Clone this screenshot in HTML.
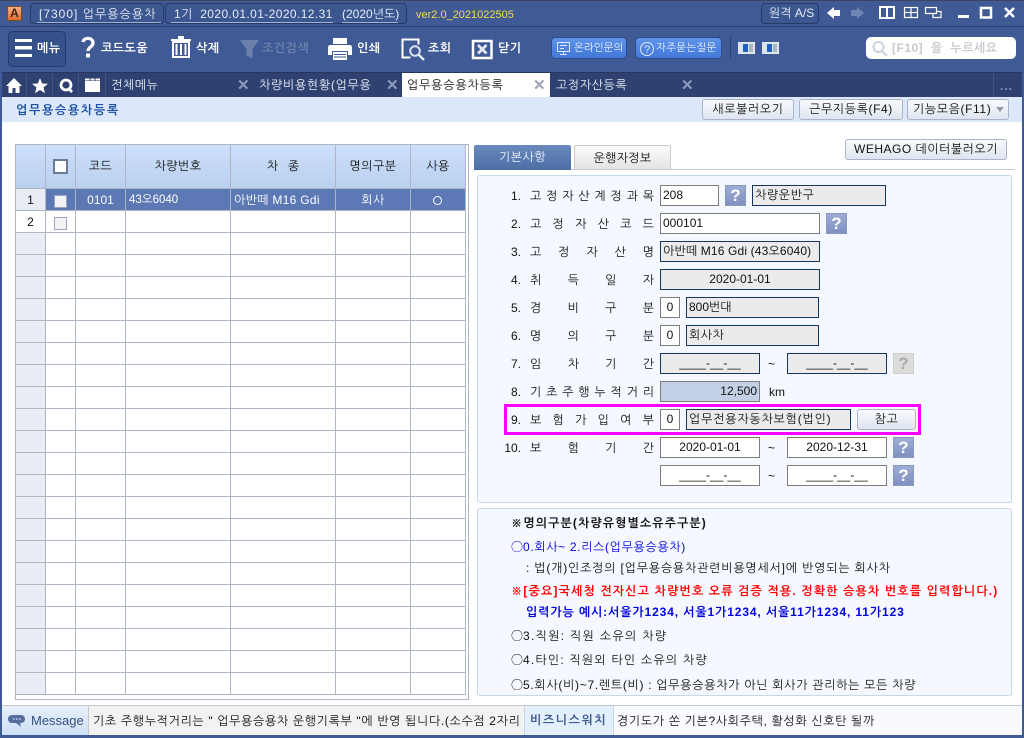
<!DOCTYPE html>
<html lang="ko"><head><meta charset="utf-8"><title>업무용승용차등록</title>
<style>
html,body{margin:0;padding:0;width:1024px;height:738px;overflow:hidden;background:#3f5a94}
body{position:relative;font:12px/14px "Liberation Sans","NanumGothic","Noto Sans CJK KR",sans-serif;color:#111}
div,span.a,svg{position:absolute}
.t{white-space:nowrap}
.c{text-align:center}
.w{color:#fff}
.box{background:#3c5690;border:1px solid #263a68;border-radius:4px;box-sizing:border-box}
.u{height:1px;background:#9fb2d6}
.btn{box-sizing:border-box;height:21px;border:1px solid #aab4c6;border-radius:3px;background:linear-gradient(#f8fafd,#dfe5ef);text-align:center;line-height:19px;white-space:nowrap;letter-spacing:.6px}
.in,.ro,.bl{box-sizing:border-box;height:21px;line-height:19px;padding:0 2px;white-space:nowrap}
.in{background:#fff;border:1px solid #7d7d7d}
.ro{background:#ebebeb;border:1px solid #17365d}
.bl{background:#c3d0e6;border:1px solid #7d7d7d}
.q{width:21px;height:21px;box-sizing:border-box;background:linear-gradient(#9fadd6,#7f90c0);border:1px solid #8898c4;color:#fff;font:bold 17px/19px "Liberation Sans",sans-serif;text-align:center}
.q.d{background:#dcdcdc;border-color:#cfcfcf;color:#a9a9a9}
.lb{display:flex;justify-content:space-between;left:530px;width:124px;height:14px;white-space:nowrap}
.n{left:490px;width:31px;text-align:right;white-space:nowrap}
.l{left:511px;white-space:nowrap;letter-spacing:.8px}
.m{font-family:"Noto Sans CJK KR",sans-serif;letter-spacing:0}
.tool{font-weight:bold;color:#fff;white-space:nowrap;top:41px;font-size:12px;letter-spacing:.5px}
.x{font:bold 15px/15px "Liberation Sans",sans-serif;color:#8d9dbd}
.gh{top:159px;color:#111;text-align:center;white-space:nowrap}
.rn{left:16px;width:29px;text-align:center}
</style></head><body>

<!-- title bar -->
<div style="left:0;top:0;width:1024px;height:1px;background:#3a4560"></div>
<div style="left:0;top:26px;width:1024px;height:1px;background:#2c3f6e"></div>
<div style="left:7px;top:6px;width:15px;height:15px;background:linear-gradient(#f6b083,#dd6d33);border:1px solid #7d4a2c;box-sizing:border-box;color:#4a2310;font:bold 12px/13px 'Liberation Sans',sans-serif;text-align:center">A</div>
<div class="box" style="left:30px;top:3px;width:134px;height:21px"></div>
<div class="box" style="left:165px;top:3px;width:242px;height:21px"></div>
<div class="t w" style="left:39px;top:7px;color:#e6ecf8;letter-spacing:1px">[7300] 업무용승용차</div>
<div class="u" style="left:37px;top:22px;width:124px"></div>
<div class="t w" style="left:174px;top:7px;color:#e6ecf8;letter-spacing:.4px">1기&nbsp; 2020.01.01-2020.12.31</div>
<div class="u" style="left:171px;top:22px;width:162px"></div>
<div class="t w" style="left:342px;top:7px;color:#e6ecf8">(2020년도)</div>
<div class="u" style="left:342px;top:22px;width:56px"></div>
<div class="t" style="left:416px;top:8px;color:#f4dc4a;font-size:11px">ver2.0_2021022505</div>

<div class="box" style="left:761px;top:3px;width:58px;height:21px"></div>
<div class="t" style="left:769px;top:6px;color:#e6ecf8">원격 A/S</div>
<svg style="left:820px;top:0" width="204" height="26" viewBox="0 0 204 26">
<path d="M7 13l7-6v3h6v6h-6v3z" fill="#fff"/>
<path d="M44 13l-7-6v3h-6v6h6v3z" fill="#6d84b4"/>
<path d="M60 7h14v11h-14zM67 7v12" fill="none" stroke="#fff" stroke-width="2"/>
<path d="M84.500 7.500h13v10h-13zM84.500 12.500h13M91 7.500v10" fill="none" stroke="#fff" stroke-width="1.200"/>
<path d="M105.500 7.500h11v6h-11zM116.500 11.500h4.500v6h-8v-4" fill="none" stroke="#fff" stroke-width="1.200"/>
<path d="M138 15h11v3h-11z" fill="#fff"/>
<path d="M161 8h10v9.500h-10z" fill="none" stroke="#fff" stroke-width="2.500"/>
<path d="M185 8l9 9M194 8l-9 9" stroke="#fff" stroke-width="2.500" fill="none"/>
</svg>

<!-- toolbar -->
<div style="left:8px;top:31px;width:58px;height:36px;box-sizing:border-box;background:#36508a;border:1px solid #26396a;border-radius:5px"></div>
<svg style="left:0;top:27px" width="520" height="46" viewBox="0 0 520 46">
<path d="M15 12h17v3h-17zM15 19h17v3.500h-17zM15 27h17v3h-17z" fill="#fff"/>
<path d="M83 15c1-5 10-5 10 1 0 4-5 4-5 8" fill="none" stroke="#fff" stroke-width="3.300"/><rect x="86" y="26.500" width="4" height="4" fill="#fff"/>
<path d="M178 9h6v3h7v2h-20v-2h7z" fill="#fff"/>
<path d="M173 15h16v15h-16zM176.500 17v11M181 17v11M185.500 17v11" fill="none" stroke="#fff" stroke-width="2"/>
<path d="M240 13h19l-6.500 9v9.500l-6-3v-6.500z" fill="#6b80ab"/>
<path d="M333 11h14v6h-14z" fill="#fff"/>
<path d="M330 18h20c1 0 2 1 2 2v8h-4v-4h-16v4h-4v-8c0-1 1-2 2-2z" fill="#fff"/>
<path d="M333 25h14v8h-14z" fill="#fff"/><path d="M334 27.500h12M334 30h12" stroke="#3f5a94"/>
<path d="M411 12.500h-8.500v18h8" fill="none" stroke="#fff" stroke-width="2"/>
<path d="M411 12.500h7.500v5" fill="none" stroke="#fff" stroke-width="2"/>
<circle cx="415" cy="24" r="4.800" fill="none" stroke="#d7def0" stroke-width="2"/><path d="M419 28l5 5" stroke="#fff" stroke-width="2.200"/>
<path d="M473 14h18.500v17h-18.500z" fill="none" stroke="#fff" stroke-width="2.500"/>
<path d="M478 18l8.500 8.500M486.500 18l-8.500 8.500" stroke="#e4e9f5" stroke-width="2.800"/>
</svg>
<div class="tool" style="left:37px">메뉴</div>
<div class="tool" style="left:101px">코드도움</div>
<div class="tool" style="left:196px">삭제</div>
<div class="tool" style="left:262px;color:#6b80ab">조건검색</div>
<div class="tool" style="left:357px">인쇄</div>
<div class="tool" style="left:428px">조회</div>
<div class="tool" style="left:498px">닫기</div>

<div style="left:551px;top:37px;width:76px;height:22px;box-sizing:border-box;border:1px solid #2f4a88;border-radius:4px;background:linear-gradient(#5d93ea,#4379d8)"></div>
<div style="left:635px;top:37px;width:87px;height:22px;box-sizing:border-box;border:1px solid #2f4a88;border-radius:4px;background:linear-gradient(#5d93ea,#4379d8)"></div>
<svg style="left:555px;top:40px" width="102" height="18" viewBox="0 0 102 18">
<path d="M2.500 2.500h12v9h-12zM5 14.500h7M8.500 11.500v3M5 5.500h7M5 8.500h4" fill="none" stroke="#dfe9fb" stroke-width="1"/>
<circle cx="92" cy="9" r="6.500" fill="none" stroke="#dfe9fb"/><text x="89" y="13" font-size="11" fill="#dfe9fb" font-family="Liberation Sans">?</text>
</svg>
<div class="t" style="left:574px;top:41px;color:#eef3fc;font-size:10.500px">온라인문의</div>
<div class="t" style="left:656px;top:41px;color:#eef3fc;font-size:10.500px;letter-spacing:.2px">자주묻는질문</div>
<div style="left:730px;top:37px;width:1px;height:21px;background:#2c3f6e"></div>
<svg style="left:738px;top:41px" width="44" height="14" viewBox="0 0 44 14">
<rect x="0" y="1" width="17" height="12" fill="#dfe5ef"/><rect x="5" y="3" width="5" height="8" fill="#1f62c4"/><rect x="11" y="3" width="4" height="8" fill="#a9b6c8"/>
<rect x="24" y="1" width="17" height="12" fill="#dfe5ef"/><rect x="29" y="3" width="5" height="8" fill="#1f62c4"/><rect x="35" y="3" width="4" height="8" fill="#a9b6c8"/>
</svg>
<div style="left:866px;top:37px;width:150px;height:22px;background:#fff;border-radius:5px"></div>
<svg style="left:871px;top:40px" width="18" height="18" viewBox="0 0 18 18"><circle cx="7.500" cy="7" r="5" fill="none" stroke="#c9d2e0" stroke-width="2"/><path d="M11 11l5 5" stroke="#c9d2e0" stroke-width="2.200"/></svg>
<div class="t" style="left:892px;top:41px;color:#c6c9cf;font-weight:bold;letter-spacing:.5px">[F10]&nbsp; 을&nbsp; 누르세요</div>

<!-- tab bar -->
<div style="left:2px;top:72px;width:1020px;height:25px;background:#2f4170;border-top:1px solid #263660;box-sizing:border-box"></div>
<svg style="left:0;top:73px" width="110" height="24" viewBox="0 0 110 24">
<path d="M14 5l8 8h-2.500v7h-4v-5h-3v5h-4v-7h-2.500z" fill="#fff"/>
<path d="M40 5l2.200 5.500 5.800.3-4.500 3.700 1.500 5.700-5-3.200-5 3.200 1.500-5.700-4.500-3.700 5.800-.3z" fill="#fff"/>
<circle cx="66" cy="12" r="5" fill="none" stroke="#fff" stroke-width="2.800"/><path d="M68 15l4 4" stroke="#fff" stroke-width="2.800"/>
<path d="M85 8h15v11h-15z" fill="#fff"/><path d="M85 5.500h15v2h-15z" fill="#fff"/><path d="M90 5v3M95 5v3" stroke="#2f4170"/>
<path d="M26.500 0v24M52.500 0v24M78.500 0v24M105.500 0v24" stroke="#3f5587"/>
</svg>
<div class="t" style="left:111px;top:78px;color:#e8edf7;letter-spacing:.6px">전체메뉴</div>
<div class="x" style="left:237px;top:78px">✕</div>
<div class="t" style="left:259px;top:78px;color:#e8edf7;letter-spacing:.7px">차량비용현황(업무용</div>
<div class="x" style="left:386px;top:78px">✕</div>
<div style="left:402px;top:73px;width:148px;height:24px;background:#fff"></div>
<div class="t" style="left:407px;top:78px;color:#111;letter-spacing:.8px">업무용승용차등록</div>
<div class="x" style="left:533px;top:78px;color:#9aa3b5">✕</div>
<div class="t" style="left:556px;top:78px;color:#e8edf7;letter-spacing:.6px">고정자산등록</div>
<div class="x" style="left:681px;top:78px">✕</div>
<div style="left:993px;top:73px;width:1px;height:24px;background:#3f5587"></div>
<div class="t" style="left:1000px;top:79px;color:#8d9dbd;font-weight:bold;letter-spacing:1px">...</div>

<!-- content -->
<div style="left:2px;top:97px;width:1020px;height:609px;background:#fff"></div>
<div style="left:2px;top:97px;width:1020px;height:25px;background:#dce8fa"></div>
<div class="t" style="left:16px;top:103px;color:#1a4fa0;font-weight:bold;letter-spacing:1.700px">업무용승용차등록</div>
<div class="btn" style="left:702px;top:99px;width:92px">새로불러오기</div>
<div class="btn" style="left:799px;top:99px;width:104px">근무지등록(F4)</div>
<div class="btn" style="left:907px;top:99px;width:102px;text-align:left;padding-left:5px">기능모음(F11)</div>
<div style="left:996px;top:107px;width:0;height:0;border:4px solid transparent;border-top:5px solid #8f98a8"></div>

<!-- grid -->
<div style="left:15px;top:144px;width:454px;height:556px;box-sizing:border-box;border:1px solid #aeb5c4;background:#fff"></div>
<div style="left:16px;top:145px;width:449px;height:44px;background:linear-gradient(#cddffa,#b9d0ee)"></div>
<div style="left:16px;top:189px;width:29px;height:22px;background:#e8ecf4"></div>
<div style="left:16px;top:233px;width:29px;height:462px;background:#e8ecf4"></div>
<div style="left:45px;top:189px;width:420px;height:22px;background:#5d79b5"></div>
<div style="left:16px;top:189px;width:449px;height:506px;background:repeating-linear-gradient(to bottom,transparent 0,transparent 21px,#aeb5c4 21px,#aeb5c4 22px)"></div>
<div style="left:16px;top:188px;width:449px;height:1px;background:#aeb5c4"></div>
<div style="left:45px;top:145px;width:1px;height:550px;background:#aeb5c4"></div>
<div style="left:75px;top:145px;width:1px;height:550px;background:#aeb5c4"></div>
<div style="left:125px;top:145px;width:1px;height:550px;background:#aeb5c4"></div>
<div style="left:230px;top:145px;width:1px;height:550px;background:#aeb5c4"></div>
<div style="left:335px;top:145px;width:1px;height:550px;background:#aeb5c4"></div>
<div style="left:410px;top:145px;width:1px;height:550px;background:#aeb5c4"></div>
<div style="left:465px;top:145px;width:1px;height:550px;background:#aeb5c4"></div>
<div style="left:53px;top:159px;width:15px;height:15px;box-sizing:border-box;background:#fff;border:2px solid #6c7a99"></div>
<div class="gh" style="left:76px;width:49px;letter-spacing:.5px">코드</div>
<div class="gh" style="left:126px;width:104px;letter-spacing:.5px">차량번호</div>
<div class="gh" style="left:231px;width:104px">차&nbsp; &nbsp;종</div>
<div class="gh" style="left:336px;width:74px;letter-spacing:.5px">명의구분</div>
<div class="gh" style="left:411px;width:54px;letter-spacing:.5px">사용</div>
<div class="rn" style="top:193px">1</div>
<div class="rn" style="top:215px">2</div>
<div style="left:54px;top:195px;width:13px;height:13px;box-sizing:border-box;background:#f3f3f3;border:1px solid #9aa5bd"></div>
<div style="left:54px;top:217px;width:13px;height:13px;box-sizing:border-box;background:#f3f3f3;border:1px solid #9aa5bd"></div>
<div class="t c w" style="left:76px;width:49px;top:193px">0101</div>
<div class="t w" style="left:129px;top:193px;font-size:11.500px">43오6040</div>
<div class="t w" style="left:234px;top:193px;letter-spacing:.3px">아반떼 M16 Gdi</div>
<div class="t c w" style="left:336px;width:74px;top:193px;letter-spacing:.5px">회사</div>
<div style="left:433px;top:196px;width:9px;height:9px;box-sizing:border-box;border:1px solid #fff;border-radius:50%"></div>

<!-- tabs -->
<div style="left:474px;top:169px;width:541px;height:1px;background:#c7ccd6"></div>
<div class="c w" style="left:474px;top:145px;width:97px;height:25px;line-height:24px;background:linear-gradient(#6a8abb,#4c6ea6);border-radius:2px 2px 0 0;letter-spacing:.5px;color:#eef3fc">기본사항</div>
<div class="c" style="left:574px;top:145px;width:97px;height:24px;line-height:24px;box-sizing:border-box;border:1px solid #ccc;border-bottom:0;background:linear-gradient(#fafafa,#e4e4e4);border-radius:2px 2px 0 0;letter-spacing:.3px">운행자정보</div>
<div class="btn" style="left:845px;top:139px;width:162px;letter-spacing:.5px">WEHAGO 데이터불러오기</div>

<!-- form panel -->
<div style="left:477px;top:175px;width:535px;height:328px;box-sizing:border-box;background:#f5f8fe;border:1px solid #c8d8ec;border-radius:3px"></div>

<div class="n" style="top:189px">1.</div><div class="lb" style="top:189px"><span>고</span><span>정</span><span>자</span><span>산</span><span>계</span><span>정</span><span>과</span><span>목</span></div>
<div class="in" style="left:660px;top:185px;width:59px">208</div><div class="q" style="left:725px;top:185px">?</div><div class="ro" style="left:752px;top:185px;width:134px;letter-spacing:.6px">차량운반구</div>

<div class="n" style="top:217px">2.</div><div class="lb" style="top:217px"><span>고</span><span>정</span><span>자</span><span>산</span><span>코</span><span>드</span></div>
<div class="in" style="left:660px;top:213px;width:160px">000101</div><div class="q" style="left:826px;top:213px">?</div>

<div class="n" style="top:245px">3.</div><div class="lb" style="top:245px"><span>고</span><span>정</span><span>자</span><span>산</span><span>명</span></div>
<div class="ro" style="left:660px;top:241px;width:160px;letter-spacing:.15px">아반떼 M16 Gdi (43오6040)</div>

<div class="n" style="top:273px">4.</div><div class="lb" style="top:273px"><span>취</span><span>득</span><span>일</span><span>자</span></div>
<div class="ro c" style="left:660px;top:269px;width:160px">2020-01-01</div>

<div class="n" style="top:301px">5.</div><div class="lb" style="top:301px"><span>경</span><span>비</span><span>구</span><span>분</span></div>
<div class="in c" style="left:660px;top:297px;width:20px">0</div><div class="ro" style="left:686px;top:297px;width:133px">800번대</div>

<div class="n" style="top:329px">6.</div><div class="lb" style="top:329px"><span>명</span><span>의</span><span>구</span><span>분</span></div>
<div class="in c" style="left:660px;top:325px;width:20px">0</div><div class="ro" style="left:686px;top:325px;width:133px;letter-spacing:.5px">회사차</div>

<div class="n" style="top:357px">7.</div><div class="lb" style="top:357px"><span>임</span><span>차</span><span>기</span><span>간</span></div>
<div class="ro c" style="left:660px;top:353px;width:100px">____-__-__</div><div class="t" style="left:768px;top:357px">~</div><div class="ro c" style="left:787px;top:353px;width:100px">____-__-__</div><div class="q d" style="left:893px;top:353px">?</div>

<div class="n" style="top:385px">8.</div><div class="lb" style="top:385px"><span>기</span><span>초</span><span>주</span><span>행</span><span>누</span><span>적</span><span>거</span><span>리</span></div>
<div class="bl" style="left:660px;top:381px;width:100px;text-align:right">12,500</div><div class="t" style="left:769px;top:385px">km</div>

<div style="left:504px;top:404px;width:417px;height:31px;box-sizing:border-box;border:3px solid #ff00ff"></div>
<div class="n" style="top:413px">9.</div><div class="lb" style="top:413px"><span>보</span><span>험</span><span>가</span><span>입</span><span>여</span><span>부</span></div>
<div class="in c" style="left:660px;top:409px;width:20px">0</div><div class="ro" style="left:686px;top:409px;width:165px;letter-spacing:.8px">업무전용자동차보험(법인)</div><div class="btn" style="left:857px;top:409px;width:59px">참고</div>

<div class="n" style="top:441px">10.</div><div class="lb" style="top:441px"><span>보</span><span>험</span><span>기</span><span>간</span></div>
<div class="in c" style="left:660px;top:437px;width:100px">2020-01-01</div><div class="t" style="left:768px;top:441px">~</div><div class="in c" style="left:787px;top:437px;width:100px">2020-12-31</div><div class="q" style="left:893px;top:437px">?</div>
<div class="in c" style="left:660px;top:465px;width:100px">____-__-__</div><div class="t" style="left:768px;top:469px">~</div><div class="in c" style="left:787px;top:465px;width:100px">____-__-__</div><div class="q" style="left:893px;top:465px">?</div>

<!-- note panel -->
<div style="left:477px;top:508px;width:535px;height:188px;box-sizing:border-box;background:#f5f8fe;border:1px solid #c8d8ec;border-radius:3px"></div>
<div class="l" style="top:516px;font-weight:bold;letter-spacing:1.1px">※명의구분(차량유형별소유주구분)</div>
<div class="l" style="top:540px;color:#0000e0;letter-spacing:.65px"><span class="m">○</span>0.회사~ 2.리스(업무용승용차)</div>
<div class="l" style="top:561px;left:526px">: 법(개)인조정의 [업무용승용차관련비용명세서]에 반영되는 회사차</div>
<div class="l" style="top:584px;color:#ff0000;font-weight:bold;letter-spacing:1.15px">※[중요]국세청 전자신고 차량번호 오류 검증 적용. 정확한 승용차 번호를 입력합니다.)</div>
<div class="l" style="top:605px;left:526px;color:#0000e0;font-weight:bold;letter-spacing:.88px">입력가능 예시:서울가1234, 서울1가1234, 서울11가1234, 11가123</div>
<div class="l" style="top:629px;letter-spacing:1.3px"><span class="m">○</span>3.직원: 직원 소유의 차량</div>
<div class="l" style="top:653px;letter-spacing:1.2px"><span class="m">○</span>4.타인: 직원외 타인 소유의 차량</div>
<div class="l" style="top:678px;letter-spacing:.7px"><span class="m">○</span>5.회사(비)~7.렌트(비) : 업무용승용차가 아닌 회사가 관리하는 모든 차량</div>

<!-- status bar -->
<div style="left:2px;top:705px;width:1020px;height:1px;background:#c4c8d0"></div>
<div style="left:2px;top:706px;width:86px;height:29px;background:linear-gradient(#e6effc,#cfe0f6)"></div>
<div style="left:88px;top:706px;width:436px;height:29px;background:#f2f2f2;border-left:1px solid #c4c8d0;box-sizing:border-box"></div>
<div class="t" style="left:93px;top:714px;width:430px;overflow:hidden;letter-spacing:.65px">기초 주행누적거리는 " 업무용승용차 운행기록부 "에 반영 됩니다.(소수점 2자리</div>
<div style="left:524px;top:706px;width:90px;height:29px;background:#e3effd;box-sizing:border-box;border:1px solid #c5d6ec;border-width:0 1px"></div>
<div style="left:614px;top:706px;width:408px;height:29px;background:#f9fafe"></div>
<svg style="left:8px;top:714px" width="18" height="15" viewBox="0 0 18 15"><path d="M4 1h9c2 0 4 1.500 4 4s-2 4-4 4h-1l1 4-5-4h-4c-2 0-4-1.500-4-4s2-4 4-4z" fill="#546f9e"/><path d="M5 5h1.500M8 5h1.500M11 5h1.500" stroke="#fff"/></svg>
<div class="t" style="left:31px;top:714px;color:#33507e;font-size:13px">Message</div>
<div class="t" style="left:530px;top:713px;color:#3d5a8c;font-weight:bold;letter-spacing:1.600px">비즈니스워치</div>
<div class="t" style="left:617px;top:714px;letter-spacing:.65px">경기도가 쏜 기본?사회주택, 활성화 신호탄 될까</div>
</body></html>
